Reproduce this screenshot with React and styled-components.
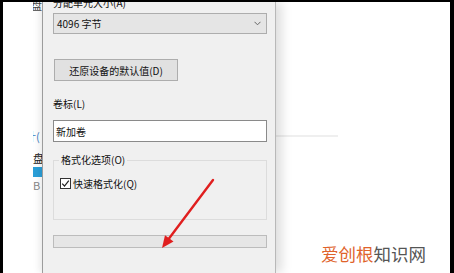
import React from "react";
import styled, { createGlobalStyle } from "styled-components";

const Global = createGlobalStyle`
  html, body { margin: 0; padding: 0; background: #000; }
  body { width: 454px; height: 273px; overflow: hidden; }
`;

const Screen = styled.div`
  width: 454px;
  height: 273px;
  background: #000;
  padding: 2px 4px 0 3px;
  box-sizing: border-box;
  display: flex;
  font-family: "Noto Sans CJK SC", "Noto Sans", sans-serif;
  color: #111;
`;

const Strip = styled.div`
  width: 39px;
  flex: none;
  background: #fff;
  display: flex;
`;

const BackWindow = styled.div`
  margin-left: 30px;
  flex: 1;
  overflow: hidden;
  display: flex;
  flex-direction: column;
`;

const Frag = styled.div`
  font-size: ${(p) => p.$size || 11}px;
  line-height: ${(p) => p.$lh || 12}px;
  height: ${(p) => p.$lh || 12}px;
  margin-top: ${(p) => p.$mt || 0}px;
  margin-left: ${(p) => p.$ml || 0}px;
  color: ${(p) => p.$color || "#333"};
  white-space: nowrap;
`;

const BlueBar = styled.div`
  height: 10px;
  margin-top: 3px;
  background: #2b9fd8;
`;

const Dialog = styled.div`
  position: relative;
  z-index: 1;
  width: 234px;
  flex: none;
  box-sizing: border-box;
  background: #f0f0f0;
  border-left: 1px solid #9c9c9c;
  border-right: 1px solid #b8b8b8;
  padding: 0 8px 0 10px;
  box-shadow: 6px 0 10px rgba(0, 0, 0, 0.13), -4px 0 6px rgba(0, 0, 0, 0.06);
  display: flex;
  flex-direction: column;
  overflow: hidden;
  font-size: 10px;
`;

const Label = styled.div`
  line-height: 14px;
  height: 14px;
  margin-top: ${(p) => p.$mt}px;
  white-space: nowrap;
`;

const Combo = styled.div`
  margin-top: 3px;
  height: 21px;
  box-sizing: border-box;
  border: 1px solid #adadad;
  background: #e5e5e5;
  display: flex;
  align-items: center;
  justify-content: space-between;
  padding: 0 5px 0 3px;
`;

const Button = styled.div`
  margin-top: 25px;
  margin-left: 1px;
  width: 124px;
  height: 22px;
  box-sizing: border-box;
  border: 1px solid #adadad;
  background: #e1e1e1;
  display: flex;
  align-items: center;
  justify-content: center;
`;

const Input = styled.div`
  margin-top: 9px;
  height: 22px;
  box-sizing: border-box;
  border: 1px solid #8a8a8a;
  background: #fff;
  display: flex;
  align-items: center;
  padding-left: 2px;
`;

const Group = styled.div`
  position: relative;
  margin-top: 18px;
  height: 60px;
  box-sizing: border-box;
  border: 1px solid #dcdcdc;
  padding: 16px 0 0 6px;
`;

const GroupTitle = styled.div`
  position: absolute;
  top: -8px;
  left: 5px;
  padding: 0 2px;
  line-height: 14px;
  background: #f0f0f0;
`;

const CheckRow = styled.div`
  display: flex;
  align-items: center;
  gap: 2px;
  height: 12px;
`;

const Box = styled.div`
  width: 11px;
  height: 11px;
  box-sizing: border-box;
  border: 1px solid #333;
  background: #fff;
  display: flex;
  align-items: center;
  justify-content: center;
`;

const Progress = styled.div`
  margin-top: 15px;
  height: 13px;
  box-sizing: border-box;
  border: 1px solid #bcbcbc;
  background: #e6e6e6;
`;

const Arrow = styled.svg`
  position: absolute;
  left: 0;
  top: 0;
  pointer-events: none;
`;

const RightArea = styled.div`
  position: relative;
  flex: 1;
  background: #fff;
`;

const Rule = styled.div`
  margin-top: 133px;
  width: 62px;
  height: 2px;
  background: #efefef;
`;

const Watermark = styled.div`
  position: absolute;
  left: 45px;
  top: 242px;
  font-size: 17.5px;
  line-height: 20px;
  white-space: nowrap;
  color: #555;
`;

const Orange = styled.span`
  color: #e0632b;
`;

export default function App() {
  return (
    <>
      <Global />
      <Screen>
        <Strip>
          <BackWindow>
            <Frag $mt={-3} $ml={-2} $color="#444">盘</Frag>
            <Frag $mt={119} $ml={-8} $color="#3b7fc4">计(</Frag>
            <Frag $mt={10} $color="#222">盘</Frag>
            <BlueBar />
            <Frag $mt={2} $color="#888">B</Frag>
          </BackWindow>
        </Strip>
        <Dialog>
          <Label $mt={-6}>分配单元大小(A)</Label>
          <Combo>
            <span>4096 字节</span>
            <svg width="7" height="5" viewBox="0 0 7 5">
              <path d="M0.5 0.8 L3.5 3.8 L6.5 0.8" fill="none" stroke="#666" strokeWidth="1" />
            </svg>
          </Combo>
          <Button>还原设备的默认值(D)</Button>
          <Label $mt={16}>卷标(L)</Label>
          <Input>新加卷</Input>
          <Group>
            <GroupTitle>格式化选项(O)</GroupTitle>
            <CheckRow>
              <Box>
                <svg width="9" height="9" viewBox="0 0 9 9">
                  <path d="M1.2 4.6 L3.5 7 L7.8 1.6" fill="none" stroke="#222" strokeWidth="1.2" />
                </svg>
              </Box>
              <span>快速格式化(Q)</span>
            </CheckRow>
          </Group>
          <Progress />
          <Arrow width="234" height="271" viewBox="0 0 234 271">
            <line x1="170" y1="178" x2="126" y2="236.5" stroke="#e01f1f" strokeWidth="2.4" strokeLinecap="round" />
            <polygon points="119,246 130.5,239.6 122,233.2" fill="#e01f1f" />
          </Arrow>
        </Dialog>
        <RightArea>
          <Rule />
          <Watermark>
            <Orange>爱创根</Orange>知识网
          </Watermark>
        </RightArea>
      </Screen>
    </>
  );
}
